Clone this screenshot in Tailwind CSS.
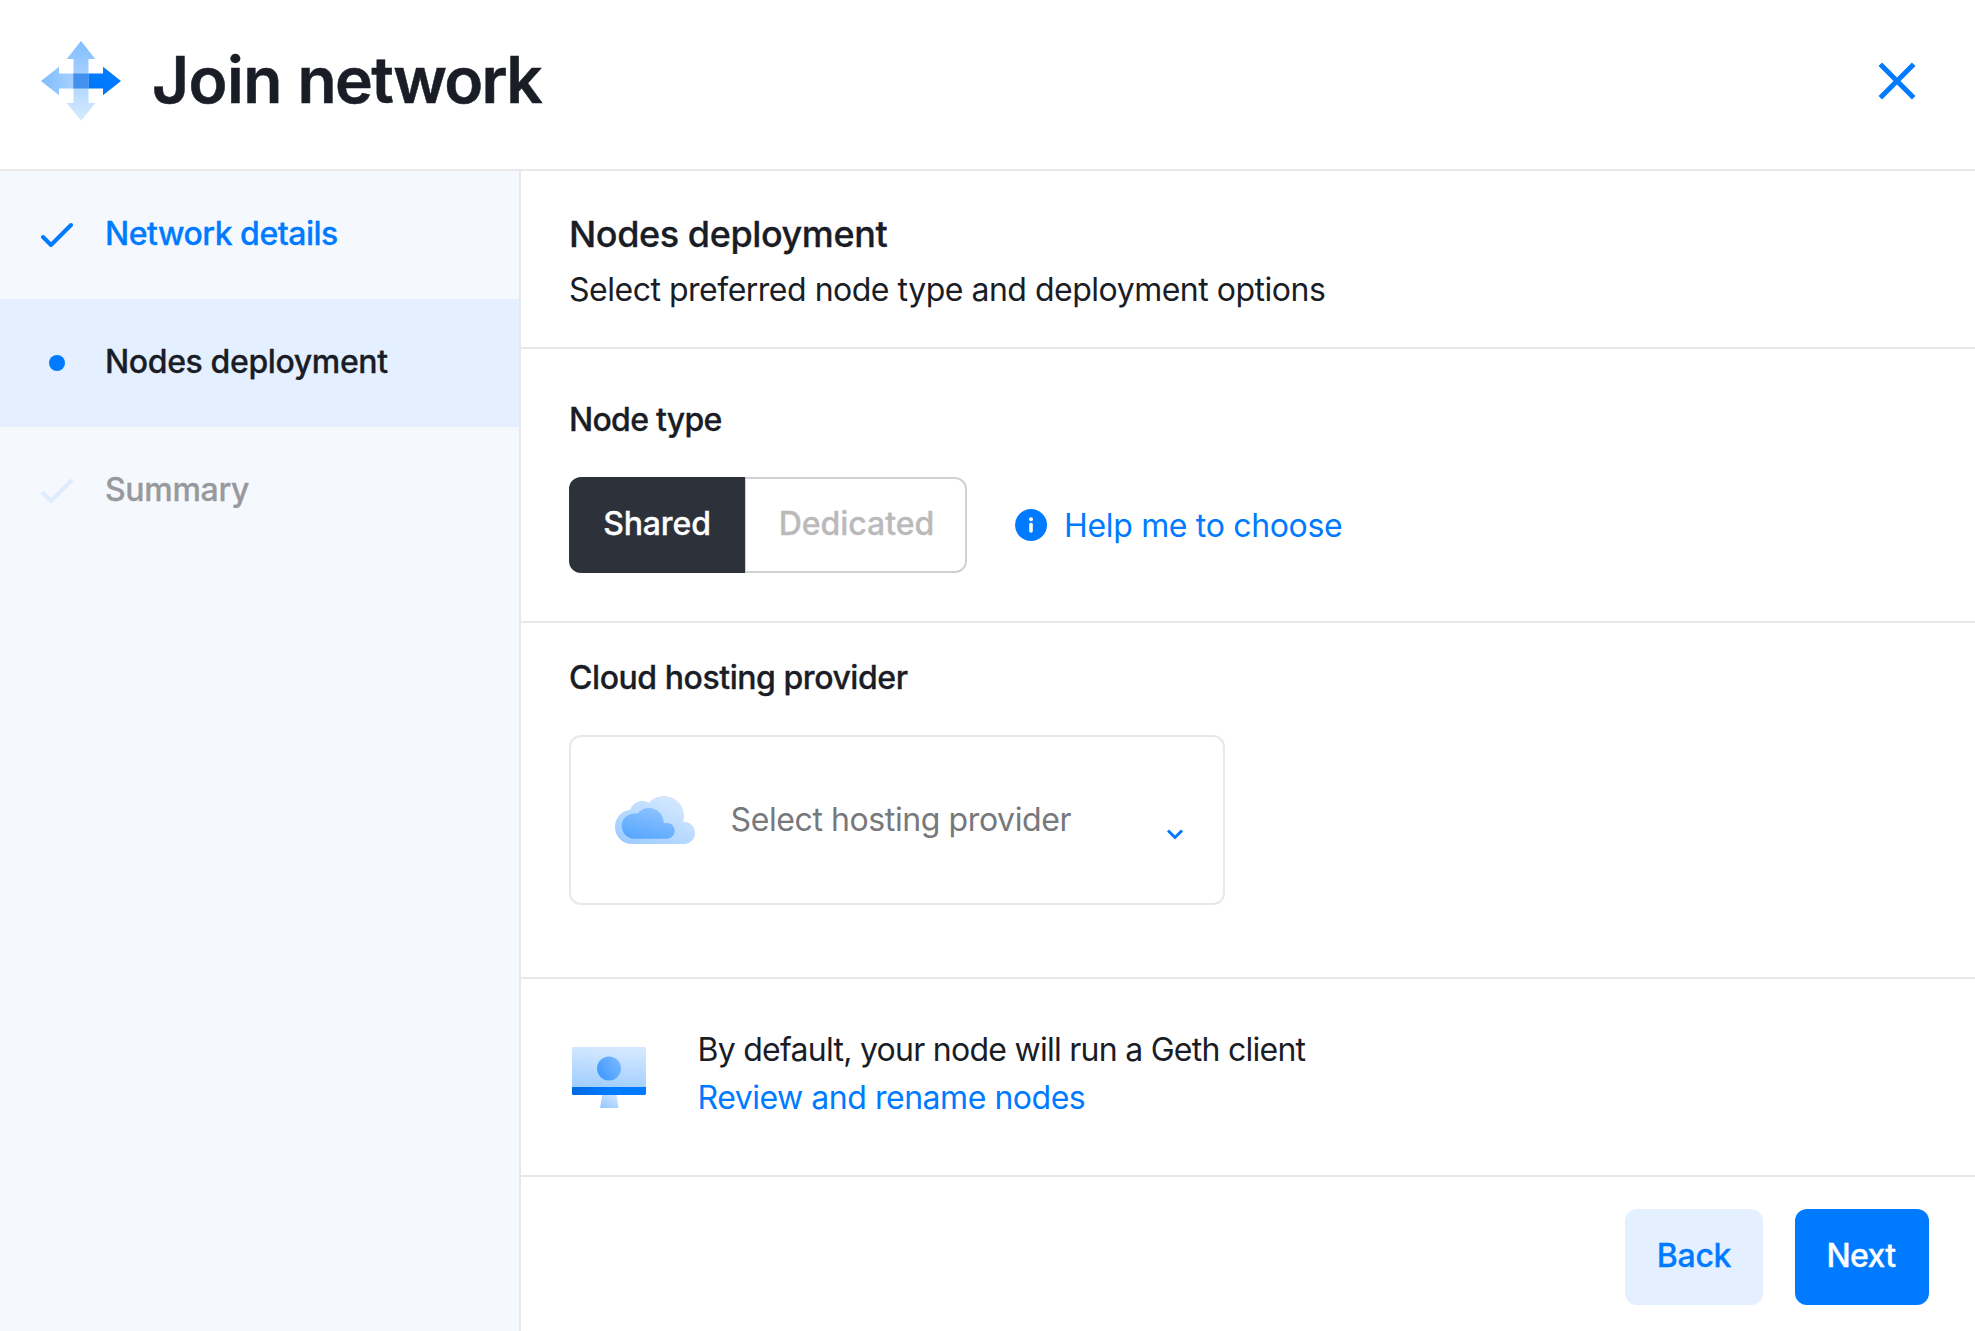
<!DOCTYPE html>
<html lang="en">
<head>
<meta charset="utf-8">
<title>Join network</title>
<script src="https://cdn.jsdelivr.net/npm/@tailwindcss/browser@4"></script>
</head>
<body class="h-screen overflow-hidden bg-white font-['Inter','Liberation_Sans',sans-serif] text-[32px] leading-[48px] text-[#1a1d26]">
<div class="flex h-full flex-col whitespace-nowrap">
  <header class="flex h-[171px] shrink-0 items-start border-b-2 border-[#e8e8e8] pt-[40px] pr-[58px] pl-[41px]">
    <svg class="mt-px h-20 w-20 shrink-0" viewBox="0 0 80 80">
      <defs>
        <linearGradient id="h1" x1="0" x2="1"><stop offset="0" stop-color="#80bdff"/><stop offset="1" stop-color="#a6d0ff"/></linearGradient>
        <linearGradient id="h2" x1="0" y1="1" x2="1" y2="0"><stop offset="0" stop-color="#0068db"/><stop offset=".5" stop-color="#007bff"/></linearGradient>
        <linearGradient id="h3" x1="0" y1="0" x2="0" y2="1"><stop offset="0" stop-color="#80bdff"/><stop offset="1" stop-color="#d9ebff"/></linearGradient>
      </defs>
      <path d="M0 40 18 25.700V32.500H33V47.500H18V54.300Z" fill="url(#h1)"/>
      <path d="M32.500 32.500H62V25.700L80 40 62 54.300V47.500H32.500Z" fill="url(#h2)"/>
      <path d="M40 0 54.300 18H47.500V62H54.300L40 80 25.700 62H32.500V18H25.700Z" fill="url(#h3)"/>
      <path d="M32.500 32.500H47.500V47.500H32.500Z" fill="#4391ee"/>
    </svg>
    <h1 class="ml-[31px] text-[64px] leading-[80px] font-semibold tracking-[-1.700px] [-webkit-text-stroke:0.5px]"><span class="tracking-[-0.500px]">Join </span>network</h1>
    <svg class="mt-[21px] ml-auto h-10 w-10" viewBox="0 0 40 40" fill="none" stroke="#007bff" stroke-width="5"><path d="M3.300 3.300 36.700 36.700M36.700 3.300 3.300 36.700"/></svg>
  </header>

  <div class="flex min-h-0 flex-1">
    <nav class="w-[521px] shrink-0 border-r-2 border-[#e8e8e8] bg-[#f5f9fe] font-medium [-webkit-text-stroke:0.3px]">
      <div class="flex h-32 items-center pl-[41px] text-[#007bff]">
        <svg class="h-8 w-8" viewBox="0 0 32 32" fill="none" stroke="currentColor" stroke-width="4" stroke-linecap="round" stroke-linejoin="round"><path d="M2 18 10 26 30 6"/></svg>
        <span class="ml-8 pb-0.5 tracking-[-0.491px]">Network details</span>
      </div>
      <div class="flex h-32 items-center bg-[#e4f0ff] pl-[41px]">
        <svg class="h-8 w-8" viewBox="0 0 32 32"><circle cx="16" cy="16" r="8" fill="#007bff"/></svg>
        <span class="ml-8 pb-0.5 tracking-[-0.380px]">Nodes deployment</span>
      </div>
      <div class="flex h-32 items-center pl-[41px] text-[#98999d]">
        <svg class="h-8 w-8" viewBox="0 0 32 32" fill="none" stroke="#deecfe" stroke-width="4" stroke-linecap="round" stroke-linejoin="round"><path d="M2 18 10 26 30 6"/></svg>
        <span class="ml-8 pb-0.5 tracking-[-0.300px]">Summary</span>
      </div>
    </nav>

    <main class="flex min-w-0 flex-1 flex-col">
      <section class="h-[178px] border-b-2 border-[#e8e8e8] pt-[39px] pl-12">
        <h2 class="text-[36px] leading-[48px] font-medium tracking-[-0.415px] [-webkit-text-stroke:0.3px]">Nodes deployment</h2>
        <p class="mt-2 tracking-[-0.490px]">Select preferred node type and deployment options</p>
      </section>

      <section class="h-[274px] border-b-2 border-[#e8e8e8] pt-[47px] pl-12">
        <h3 class="font-medium tracking-[-0.722px] [-webkit-text-stroke:0.3px]">Node type</h3>
        <div class="mt-[33px] flex h-24 items-center">
          <div class="flex h-24 font-medium [-webkit-text-stroke:0.3px]">
            <button class="flex w-44 items-center justify-center rounded-l-xl bg-[#2d3139] pb-0.5 tracking-[-0.131px] text-white">Shared</button>
            <button class="flex w-[222px] items-center justify-center rounded-r-xl border-2 border-l border-[#d1d1d1] pb-0.5 pl-0.5 tracking-[-0.045px] text-[#bababb]">Dedicated</button>
          </div>
          <svg class="ml-12 h-8 w-8" viewBox="0 0 32 32"><circle cx="16" cy="16" r="16" fill="#007bff"/><circle cx="16" cy="10.200" r="2" fill="#fff"/><path d="M16 15.500V22" stroke="#fff" stroke-width="3.600" stroke-linecap="round"/></svg>
          <a class="ml-[17px] pt-0.5 tracking-[-0.330px] text-[#007bff]">Help me to choose</a>
        </div>
      </section>

      <section class="h-[356px] border-b-2 border-[#e8e8e8] pt-[31px] pl-12">
        <h3 class="font-medium tracking-[-0.450px] [-webkit-text-stroke:0.3px]">Cloud hosting provider</h3>
        <div class="mt-[33px] flex h-[170px] w-[656px] items-center rounded-xl border-2 border-[#e8e8e8] pr-[38px] pl-11">
          <svg class="h-12 w-20" viewBox="0 0 80 48">
            <defs>
              <linearGradient id="c1" x1="0" y1="1" x2=".75" y2="0"><stop offset="0" stop-color="#99caff"/><stop offset="1" stop-color="#d6e9ff"/></linearGradient>
              <linearGradient id="c2" x1=".25" y1="1" x2=".7" y2="0"><stop offset="0" stop-color="#57a7ff"/><stop offset="1" stop-color="#8dc3ff"/></linearGradient>
            </defs>
            <path d="M17 48C7.500 48 0 40.500 0 31 0 22 6.500 14.800 15.200 13.800 17 8.500 21.500 5 27 5 29.700 5 31.800 5.600 33.800 6.900 37.500 2.600 42.800 0 49 0 60 0 69 9 69 20 69 22.200 68.700 24.200 68.100 26.100 74.800 25.400 80 30.500 80 37 80 43.200 75.200 48 69 48Z" fill="url(#c1)"/>
            <path d="M19.400 42.700C12.400 42.700 6.700 37.100 6.700 30 6.700 22.500 13 16.700 22.300 17.700 25.500 14 29.500 12 34 12 42.300 12 49 18.700 48.700 27H52C56.300 27 59.700 30.500 59.700 34.800 59.700 39.200 56.200 42.700 51.800 42.700Z" fill="url(#c2)"/>
          </svg>
          <span class="ml-[35.500px] tracking-[-0.400px] text-[#77787c]">Select hosting provider</span>
          <svg class="mt-[27px] ml-auto h-4 w-5" viewBox="0 0 20 16" fill="none" stroke="#007bff" stroke-width="3"><path d="M3 4.500 10 11.500 17 4.500"/></svg>
        </div>
      </section>

      <section class="flex h-[198px] items-start border-b-2 border-[#e8e8e8] pt-[47px] pl-[51px]">
        <svg class="mt-5 h-16 w-[76px]" viewBox="0 0 76 64">
          <defs>
            <linearGradient id="m1" x1="0" y1="1" x2=".15" y2="0"><stop offset="0" stop-color="#9fcdff"/><stop offset="1" stop-color="#d3e8ff"/></linearGradient>
            <linearGradient id="m2" x1="0" y1=".8" x2="1" y2=".2"><stop offset="0" stop-color="#3d99ff"/><stop offset="1" stop-color="#79b8ff"/></linearGradient>
            <linearGradient id="m3" x1="0" x2="1"><stop offset="0" stop-color="#006ae0"/><stop offset=".5" stop-color="#007bff"/></linearGradient>
            <linearGradient id="m4" x1="0" y1="1" x2="1" y2="0"><stop offset="0" stop-color="#94c7ff"/><stop offset="1" stop-color="#d3e8ff"/></linearGradient>
          </defs>
          <path d="M30.500 48H44.500L46.500 62H28Z" fill="url(#m4)"/>
          <path d="M0 41V2.500Q0 1 1.500 1H72.500Q74 1 74 2.500V41Z" fill="url(#m1)"/>
          <path d="M0 41H74V47.500Q74 49 72.500 49H1.500Q0 49 0 47.500Z" fill="url(#m3)"/>
          <circle cx="37" cy="22.500" r="12" fill="url(#m2)"/>
        </svg>
        <div class="ml-[49.500px]">
          <p class="tracking-[-0.735px]">By default, your node will run a Geth client</p>
          <a class="block tracking-[-0.470px] text-[#007bff]">Review and rename nodes</a>
        </div>
      </section>

      <footer class="flex justify-end gap-8 pt-8 pr-[46px] font-medium [-webkit-text-stroke:0.3px]">
        <button class="flex h-24 w-[138px] items-center justify-center rounded-xl bg-[#e4f0ff] pb-0.5 tracking-[-0.319px] text-[#007bff]">Back</button>
        <button class="flex h-24 w-[134px] items-center justify-center rounded-xl bg-[#007bff] pr-0.5 pb-0.5 tracking-[-0.700px] text-white">Next</button>
      </footer>
    </main>
  </div>
</div>
</body>
</html>
